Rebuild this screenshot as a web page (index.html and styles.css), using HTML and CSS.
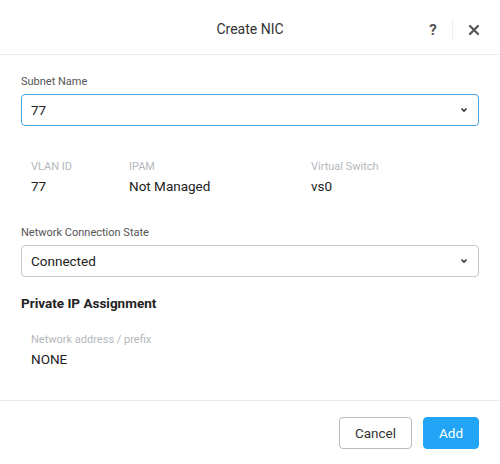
FILE: index.html
```html
<!DOCTYPE html>
<html>
<head>
    <title>Create NIC</title>
    <link rel="stylesheet" href="styles.css">
</head>
<body>
    <div class="modal">
        <div class="modal-header">
            <div class="modal-title">Create NIC</div>
            <div class="header-actions">
                <span class="help">?</span>
                <span class="divider"></span>
                <svg class="close" width="12" height="12" viewBox="0 0 12 12">
                    <path d="M2 2 L10 10 M10 2 L2 10" stroke="#555" stroke-width="2.2" stroke-linecap="round"/>
                </svg>
            </div>
        </div>

        <div class="modal-body">
            <div class="field">
                <label class="field-label">Subnet Name</label>
                <div class="select active">
                    <span>77</span>
                    <svg class="chevron" width="8" height="6" viewBox="0 0 8 6">
                        <path d="M1.5 1.5 L4 4 L6.5 1.5" fill="none" stroke="#333" stroke-width="1.6"/>
                    </svg>
                </div>
            </div>

            <div class="info-row">
                <div class="info">
                    <div class="info-label">VLAN ID</div>
                    <div class="info-value">77</div>
                </div>
                <div class="info">
                    <div class="info-label">IPAM</div>
                    <div class="info-value">Not Managed</div>
                </div>
                <div class="info">
                    <div class="info-label">Virtual Switch</div>
                    <div class="info-value">vs0</div>
                </div>
            </div>

            <div class="field">
                <label class="field-label">Network Connection State</label>
                <div class="select">
                    <span>Connected</span>
                    <svg class="chevron" width="8" height="6" viewBox="0 0 8 6">
                        <path d="M1.5 1.5 L4 4 L6.5 1.5" fill="none" stroke="#333" stroke-width="1.6"/>
                    </svg>
                </div>
            </div>

            <h4 class="section-title">Private IP Assignment</h4>

            <div class="info-row single">
                <div class="info">
                    <div class="info-label">Network address / prefix</div>
                    <div class="info-value">NONE</div>
                </div>
            </div>
        </div>

        <div class="modal-footer">
            <button class="btn">Cancel</button>
            <button class="btn primary">Add</button>
        </div>
    </div>
</body>
</html>
```

FILE: styles.css
```css
body {
    margin: 0;
    font-family: Roboto, "Liberation Sans", sans-serif;
    color: #333;
    background: #fff;
}
.modal {
    width: 500px;
    height: 464px;
    display: flex;
    flex-direction: column;
}
.modal-header {
    height: 55px;
    border-bottom: 1px solid #e8ebee;
    display: flex;
    align-items: center;
    justify-content: center;
    position: relative;
    box-sizing: border-box;
    padding-top: 3px;
}
.modal-title {
    font-size: 14px;
    color: #333;
}
.header-actions {
    position: absolute;
    right: 20px;
    top: 19px;
    display: flex;
    align-items: center;
    gap: 12px;
}
.help {
    font-size: 15px;
    font-weight: bold;
    color: #555;
    width: 14px;
    text-align: center;
}
.divider {
    width: 1px;
    height: 22px;
    background: #eceff1;
}
.close {
    margin-left: 3px;
}
.modal-body {
    flex: 1;
    padding: 20px 21px 0;
}
.field-label {
    display: block;
    font-size: 11px;
    color: #555;
    margin-bottom: 6px;
}
.select {
    height: 32px;
    border: 1px solid #c4c9cd;
    border-radius: 4px;
    display: flex;
    align-items: center;
    justify-content: space-between;
    padding: 0 10px 0 9px;
    box-sizing: border-box;
    font-size: 13.5px;
    color: #222;
}
.select.active {
    border-color: #4aa3df;
}
.info-row {
    display: grid;
    grid-template-columns: 98px 182px 1fr;
    padding: 34px 10px 0;
    margin-bottom: 32px;
}
.info-row.single {
    grid-template-columns: 1fr;
    padding-top: 22px;
    margin-bottom: 0;
}
.info-label {
    font-size: 11px;
    color: #b3b8bc;
    margin-bottom: 5px;
}
.info-value {
    font-size: 13.5px;
    color: #222;
}
.section-title {
    font-size: 13.5px;
    font-weight: bold;
    margin: 18px 0 0;
    color: #222;
}
.modal-footer {
    height: 63px;
    border-top: 1px solid #e8ebee;
    display: flex;
    align-items: center;
    justify-content: flex-end;
    gap: 11px;
    padding: 0 21px;
}
.btn {
    height: 32px;
    width: 73px;
    border: 1px solid #b5bbc0;
    border-radius: 4px;
    background: #fff;
    font-family: inherit;
    font-size: 13.5px;
    color: #333;
    cursor: pointer;
}
.btn.primary {
    width: 56px;
    background: #22a5f7;
    border-color: #22a5f7;
    color: #fff;
}
```
